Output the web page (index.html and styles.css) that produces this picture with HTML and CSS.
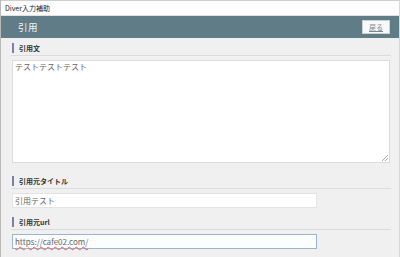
FILE: index.html
```html
<!DOCTYPE html>
<html lang="ja">
<head>
<meta charset="utf-8">
<link rel="stylesheet" href="styles.css">
</head>
<body>
<div class="window">
  <div class="titlebar">Diver入力補助</div>
  <div class="header">
    <span class="header-title">引用</span>
    <button class="back-btn">戻る</button>
  </div>
  <div class="content">
    <div class="field field-quote">
      <div class="label">引用文</div>
      <div class="textarea">テストテストテスト<span class="grip"></span></div>
    </div>
    <div class="field field-title">
      <div class="label">引用元タイトル</div>
      <div class="input">引用テスト</div>
    </div>
    <div class="field field-url">
      <div class="label">引用元url</div>
      <div class="input focused"><span class="spell">https://cafe02.com/</span></div>
    </div>
  </div>
</div>
</body>
</html>
```

FILE: styles.css
```css
* { box-sizing: border-box; }
html, body { margin: 0; padding: 0; }
body {
  width: 400px;
  height: 257px;
  overflow: hidden;
  font-family: "Noto Sans CJK JP", "Noto Sans", sans-serif;
  background: #f0f0f0;
}
.window {
  height: 257px;
  border-left: 1px solid #b9b9b9;
  border-right: 1px solid #d8d8d8;
  display: flex;
  flex-direction: column;
}
.titlebar {
  height: 16px;
  background: #fdfdfd;
  border-top: 1px solid #cfcfcf;
  border-bottom: 1px solid #e0e0e0;
  font-size: 7px;
  line-height: 14px;
  padding-left: 4px;
  color: #222;
}
.header {
  height: 22px;
  background: #5f7c87;
  display: flex;
  align-items: center;
  justify-content: space-between;
  padding: 0 9px 0 17px;
}
.header-title {
  color: #f4f7f8;
  font-size: 9.5px;
  letter-spacing: 0.5px;
}
.back-btn {
  font-family: inherit;
  font-size: 7px;
  height: 14px;
  width: 28px;
  padding: 0;
  background: #f7f8f8;
  border: 1px solid #c9d1d4;
  color: #7b878c;
  line-height: 12px;
  text-decoration: underline;
}
.content {
  padding: 5px 8px 0 10px;
  display: flex;
  flex-direction: column;
}
.field-title { margin-top: 13px; }
.field-url { margin-top: 9px; }
.field { position: relative; }
.label {
  font-size: 7px;
  font-weight: bold;
  color: #333;
  line-height: 10px;
  border-left: 2px solid #7c7fa6;
  padding-left: 5px;
  margin-left: 1px;
  margin-bottom: 7px;
  position: relative;
}
.label::after {
  content: "";
  display: block;
  position: absolute;
  left: -3px;
  right: 0;
  bottom: -3px;
  height: 1px;
  background: #dcdcdc;
}
.textarea {
  position: relative;
  height: 103px;
  background: #fff;
  border: 1px solid #dcdcdc;
  margin-left: 1px;
  margin-right: 1px;
  font-size: 8px;
  color: #666;
  padding: 0 2px;
  line-height: 12px;
}
.grip {
  position: absolute;
  right: 1px;
  bottom: 1px;
  width: 6px;
  height: 6px;
  background: linear-gradient(135deg, transparent 45%, #aaa 45%, #aaa 55%, transparent 55%, transparent 72%, #aaa 72%, #aaa 82%, transparent 82%);
}
.input {
  width: 305px;
  height: 15px;
  margin-left: 1px;
  background: #fff;
  border: 1px solid #e4e4e4;
  font-size: 8px;
  color: #666;
  padding: 0 2px;
  line-height: 13px;
}
.input.focused {
  border: 1px solid #9bb5d0;
  background: #fbfdff;
}
.spell {
  text-decoration: underline wavy #e06060;
  text-decoration-thickness: 1px;
  text-underline-offset: 1px;
}
```
